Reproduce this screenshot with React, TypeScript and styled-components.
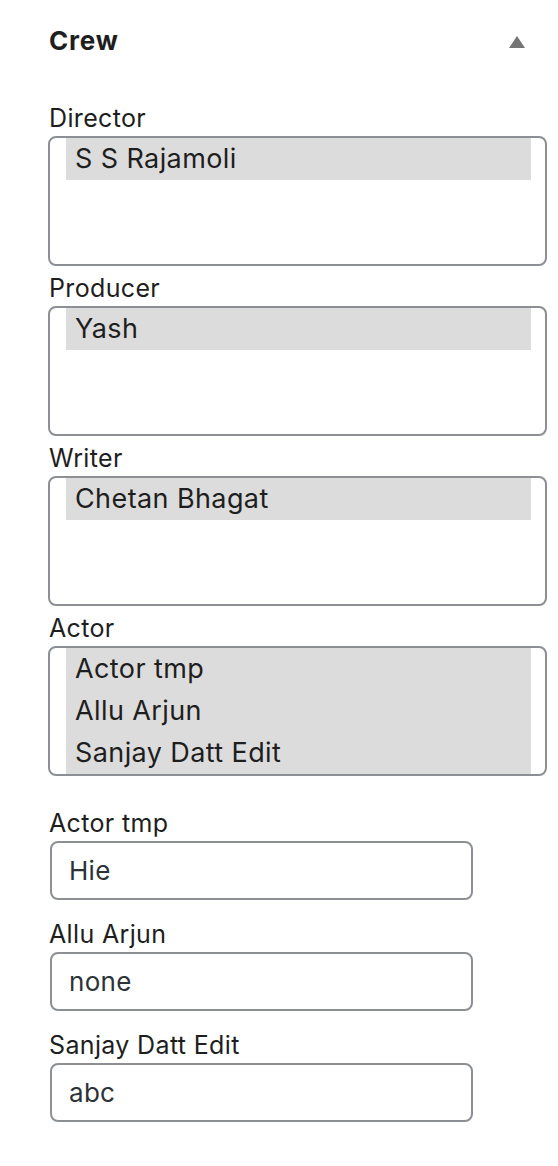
import React from 'react';
import styled, { createGlobalStyle } from 'styled-components';

const GlobalStyle = createGlobalStyle`
  html, body {
    margin: 0;
    padding: 0;
    background: #ffffff;
  }

  body {
    font-family: Inter, "Noto Sans", "Liberation Sans", sans-serif;
    color: #1e1e1e;
  }
`;

type ListField = {
  label: string;
  options: string[];
};

type TextField = {
  label: string;
  value: string;
};

const listFields: ListField[] = [
  { label: 'Director', options: ['S S Rajamoli'] },
  { label: 'Producer', options: ['Yash'] },
  { label: 'Writer', options: ['Chetan Bhagat'] },
  { label: 'Actor', options: ['Actor tmp', 'Allu Arjun', 'Sanjay Datt Edit'] },
];

const textFields: TextField[] = [
  { label: 'Actor tmp', value: 'Hie' },
  { label: 'Allu Arjun', value: 'none' },
  { label: 'Sanjay Datt Edit', value: 'abc' },
];

const App: React.FC = () => (
  <>
    <GlobalStyle />
    <Panel>
      <Header>
        <Title>Crew</Title>
        <Toggle aria-label="Collapse">
          <svg width="16" height="12" viewBox="0 0 16 12">
            <path d="M8 0 L16 12 L0 12 Z" fill="#757575" />
          </svg>
        </Toggle>
      </Header>

      <ListGroup>
        {listFields.map(({ label, options }) => (
          <Field key={label}>
            <Label>{label}</Label>
            <ListBox>
              {options.map((option) => (
                <Option key={option}>{option}</Option>
              ))}
            </ListBox>
          </Field>
        ))}
      </ListGroup>

      <InputGroup>
        {textFields.map(({ label, value }) => (
          <Field key={label}>
            <Label>{label}</Label>
            <TextInput defaultValue={value} />
          </Field>
        ))}
      </InputGroup>
    </Panel>
  </>
);

const Panel = styled.div`
  display: flex;
  flex-direction: column;
  width: 558px;
  box-sizing: border-box;
  padding: 23px 11px 40px 48px;
`;

const Header = styled.div`
  display: flex;
  align-items: center;
  justify-content: space-between;
  height: 36px;
  padding-right: 22px;
`;

const Title = styled.h2`
  margin: 0 0 0 1px;
  font-size: 26px;
  font-weight: 700;
  line-height: 36px;
  letter-spacing: 0.8px;
  color: #1e1e1e;
`;

const Toggle = styled.button`
  display: flex;
  align-items: center;
  justify-content: center;
  padding: 0;
  border: none;
  background: none;
  margin-top: 2px;
`;

const ListGroup = styled.div`
  display: flex;
  flex-direction: column;
  gap: 7px;
  margin-top: 44px;
`;

const InputGroup = styled.div`
  display: flex;
  flex-direction: column;
  gap: 19px;
  margin-top: 32px;
`;

const Field = styled.div`
  display: flex;
  flex-direction: column;
  gap: 2px;
`;

const Label = styled.label`
  margin-left: 1px;
  font-size: 25px;
  line-height: 31px;
  letter-spacing: 0.35px;
  color: #1e1e1e;
`;

const ListBox = styled.div`
  display: flex;
  flex-direction: column;
  box-sizing: border-box;
  height: 130px;
  padding: 0 14px 0 16px;
  border: 2px solid #8c8f94;
  border-radius: 8px;
  background: #ffffff;
  overflow: hidden;
`;

const Option = styled.div`
  height: 42px;
  padding-left: 9px;
  font-size: 27px;
  line-height: 42px;
  letter-spacing: 0.4px;
  color: #1e1e1e;
  background: #dcdcdc;
  white-space: nowrap;
`;

const TextInput = styled.input`
  box-sizing: border-box;
  width: 423px;
  height: 59px;
  margin-left: 2px;
  padding: 0 17px;
  border: 2px solid #8c8f94;
  border-radius: 8px;
  font-family: Inter, "Noto Sans", "Liberation Sans", sans-serif;
  font-size: 26px;
  letter-spacing: 0.3px;
  color: #2c3338;
  background: #ffffff;
  outline: none;
`;

export default App;
